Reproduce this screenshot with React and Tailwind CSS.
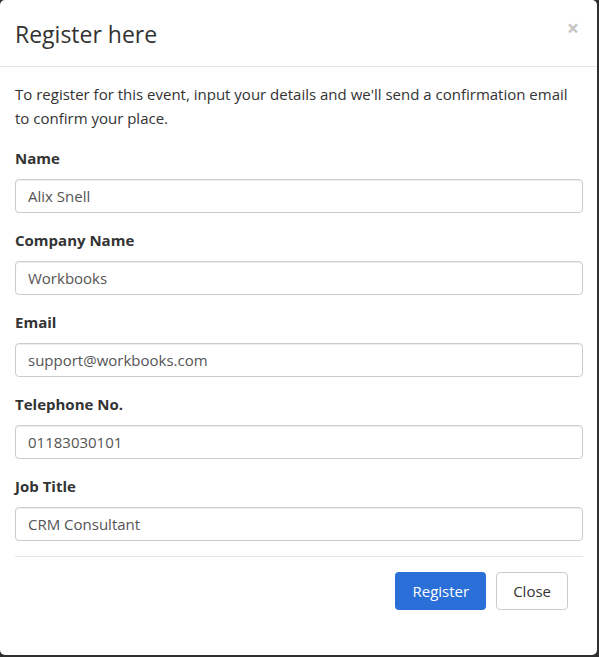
import React from 'react';

const fields = [
  { label: 'Name', value: 'Alix Snell' },
  { label: 'Company Name', value: 'Workbooks' },
  { label: 'Email', value: 'support@workbooks.com' },
  { label: 'Telephone No.', value: '01183030101' },
  { label: 'Job Title', value: 'CRM Consultant' },
];

export default function App() {
  return (
    <div
      className="w-[599px] h-[657px] bg-[#2f2f2f] overflow-hidden"
      style={{ fontFamily: '"Open Sans", "Noto Sans", sans-serif' }}
    >
      <div className="w-[597px] h-[655px] bg-white rounded-[5px] text-[#333]">
        {/* Header */}
        <div className="h-[67px] flex items-center justify-between pl-[15px] pr-[18px] border-b border-[#e5e5e5]">
          <h4 className="text-[23px] leading-none font-normal mt-[3px]">Register here</h4>
          <button className="text-[21px] font-bold leading-none text-[#c4c4c4] -mt-[10px]">×</button>
        </div>

        {/* Body */}
        <div className="pl-[15px] pr-[14px] pt-[15px]">
          <p className="text-[15px] leading-[24px] mb-[15px]">
            To register for this event, input your details and we'll send a confirmation email to confirm your place.
          </p>

          {fields.map((f) => (
            <div key={f.label} className="mb-[14px]">
              <label className="block text-[15px] leading-[24px] font-bold pt-[1px] mb-[9px]">{f.label}</label>
              <input
                readOnly
                value={f.value}
                className="block w-full h-[34px] px-[12px] text-[15px] text-[#555] border border-[#ccc] rounded-[4px] outline-none shadow-[inset_0_1px_1px_rgba(0,0,0,0.075)]"
              />
            </div>
          ))}

          {/* Footer */}
          <div className="mt-[15px] border-t border-[#e5e5e5] pt-[15px] flex justify-end gap-[10px] pr-[15px]">
            <button className="h-[38px] px-[17px] rounded-[4px] bg-[#2a6fd8] text-white text-[15px]">Register</button>
            <button className="h-[38px] px-[16px] rounded-[4px] bg-white border border-[#ccc] text-[#333] text-[15px]">Close</button>
          </div>
        </div>
      </div>
    </div>
  );
}
